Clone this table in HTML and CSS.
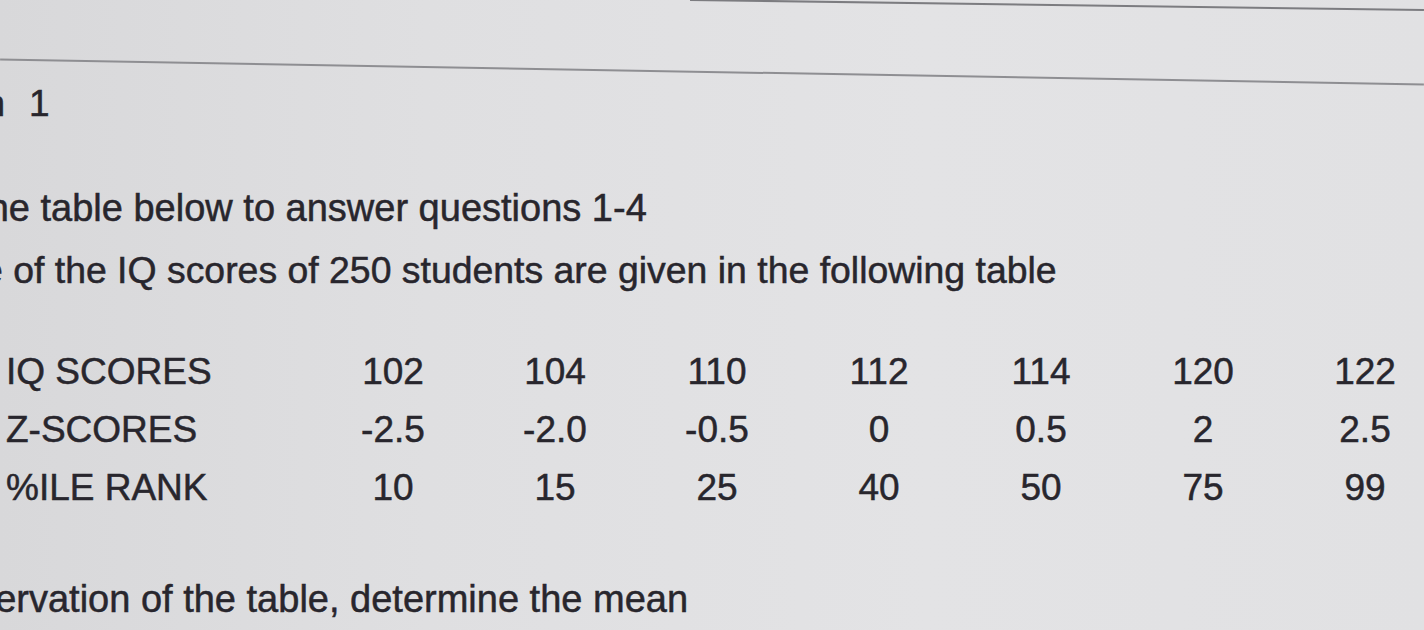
FILE: index.html
```html
<!DOCTYPE html>
<html lang="en">
<head>
<meta charset="utf-8">
<title>Question 1</title>
<link rel="stylesheet" href="styles.css">
</head>
<body>
<div class="page">
  <div class="top-rule"></div>
  <div class="header-rule"></div>

  <div class="question-title">
    <span class="q-word">Question</span>
    <span class="q-num">1</span>
  </div>

  <div class="intro">
    <p class="line line-1">Use the table below to answer questions 1-4</p>
    <p class="line line-2">A sample of the IQ scores of 250 students are given in the following table</p>
  </div>

  <div class="score-table">
    <div class="label">IQ SCORES</div>
    <div class="val">102</div><div class="val">104</div><div class="val">110</div><div class="val">112</div><div class="val">114</div><div class="val">120</div><div class="val">122</div>

    <div class="label">Z-SCORES</div>
    <div class="val">-2.5</div><div class="val">-2.0</div><div class="val">-0.5</div><div class="val">0</div><div class="val">0.5</div><div class="val">2</div><div class="val">2.5</div>

    <div class="label">%ILE RANK</div>
    <div class="val">10</div><div class="val">15</div><div class="val">25</div><div class="val">40</div><div class="val">50</div><div class="val">75</div><div class="val">99</div>
  </div>

  <p class="line line-3">By observation of the table, determine the mean</p>
</div>
</body>
</html>
```

FILE: styles.css
```css
html, body {
  margin: 0;
  padding: 0;
}

body {
  width: 1424px;
  height: 630px;
  overflow: hidden;
  background: linear-gradient(90deg, #d8d8da 0%, #dfdfe1 30%, #e3e3e5 65%, #e1e1e3 100%);
  font-family: "Liberation Sans", Arial, Helvetica, sans-serif;
  color: #28262d;
  -webkit-text-stroke: 0.5px #28262d;
}

.page {
  display: flex;
  flex-direction: column;
  padding-top: 4px;
}

.top-rule {
  height: 2px;
  margin-left: 690px;
  background: #7c7c80;
  transform: rotate(0.8deg);
}

.header-rule {
  height: 2px;
  margin-top: 65px;
  background: #8e8e92;
  transform: rotate(1deg);
}

.question-title {
  display: flex;
  gap: 24px;
  margin-top: 9px;
  margin-left: -143px;
  font-size: 37px;
  line-height: 44px;
  white-space: nowrap;
}

.intro {
  display: flex;
  flex-direction: column;
  gap: 18px;
  margin-top: 60px;
}

.line {
  margin: 0;
  font-size: 37px;
  line-height: 44px;
  white-space: nowrap;
}

.line-1 {
  margin-left: -101px;
  font-size: 38px;
}

.line-2 {
  margin-left: -151px;
  font-size: 37.4px;
}

.score-table {
  display: grid;
  grid-template-columns: 306px repeat(7, 162px);
  row-gap: 14px;
  margin-top: 58px;
  margin-left: 6px;
  font-size: 37px;
  line-height: 44px;
  white-space: nowrap;
}

.label {
  text-align: left;
}

.val {
  text-align: center;
}

.line-3 {
  margin-top: 67px;
  margin-left: -121px;
  font-size: 38px;
}
```
